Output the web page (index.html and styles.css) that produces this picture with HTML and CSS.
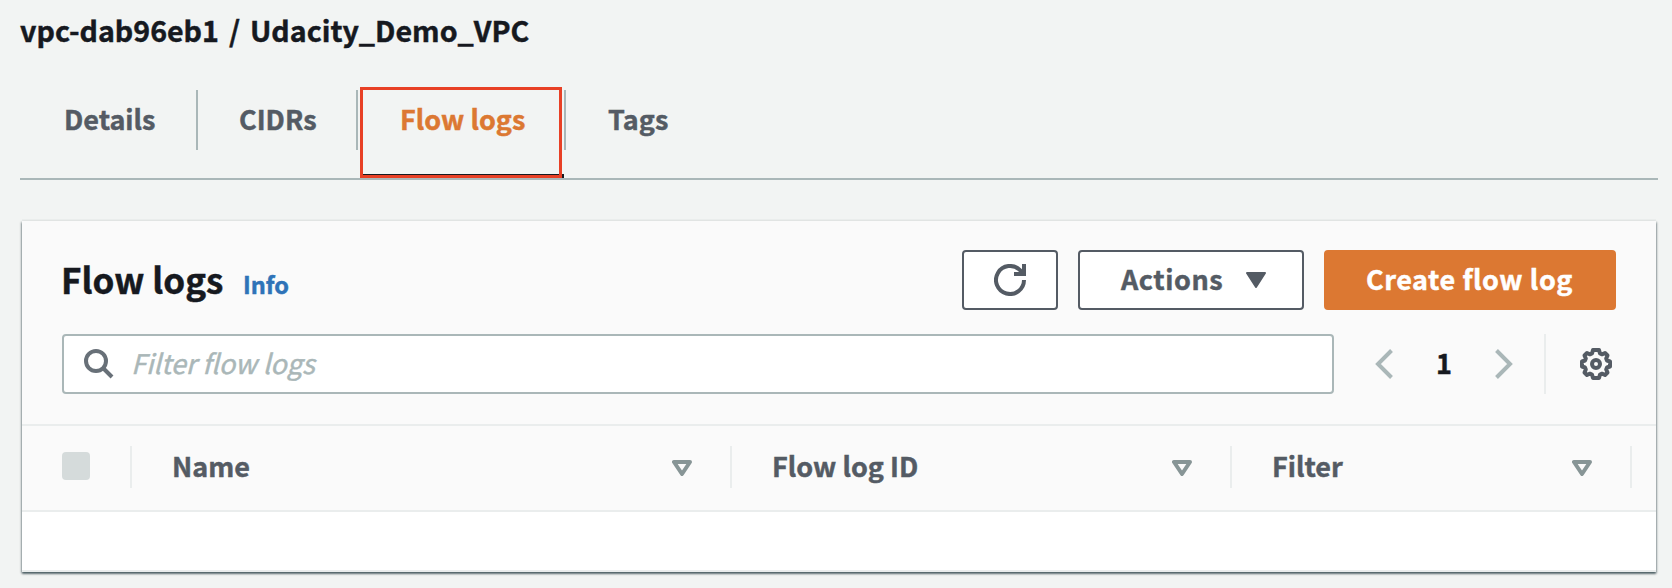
FILE: index.html
```html
<!DOCTYPE html>
<html lang="en">
<head>
<meta charset="utf-8">
<title>Flow logs</title>
<link rel="stylesheet" href="styles.css">
</head>
<body>
<h1 class="page-title"><span>vpc-dab96eb1 / Udacity_Demo_VPC</span></h1>
<nav class="tabs">
  <a class="tab tab-details"><span>Details</span></a>
  <a class="tab tab-cidrs"><span>CIDRs</span></a>
  <a class="tab tab-flow active"><span>Flow logs</span></a>
  <a class="tab tab-tags"><span>Tags</span></a>
</nav>
<section class="card">
  <header class="card-header">
    <div class="heading-row">
      <h2 class="heading"><span>Flow logs</span></h2>
      <a class="info"><span>Info</span></a>
      <div class="actions">
        <button class="btn btn-refresh" aria-label="Refresh">
          <svg width="32" height="32" viewBox="0 0 32 32" fill="none" stroke="currentColor" stroke-width="4"><path d="M30 16a14 14 0 1 1-4-9.800l3 3"/><path d="M30 0v10H20"/></svg>
        </button>
        <button class="btn btn-actions"><span>Actions</span>
          <svg width="20" height="16" viewBox="0 0 20 16" fill="currentColor" stroke="currentColor" stroke-width="2" stroke-linejoin="round"><path d="M1 1h18l-9 14z"/></svg>
        </button>
        <button class="btn btn-primary"><span>Create flow log</span></button>
      </div>
    </div>
    <div class="filter-row">
      <div class="search">
        <svg width="30" height="30" viewBox="0 0 30 30" fill="none" stroke="currentColor" stroke-width="4"><circle cx="12" cy="12" r="10"/><path d="M19 19l9 9"/></svg>
        <span class="placeholder">Filter flow logs</span>
      </div>
      <div class="pager">
        <svg width="18" height="30" viewBox="0 0 18 30" fill="none" stroke="currentColor" stroke-width="4"><path d="M16.500 1.500L3 15l13.500 13.500"/></svg>
        <span class="page">1</span>
        <svg width="18" height="30" viewBox="0 0 18 30" fill="none" stroke="currentColor" stroke-width="4"><path d="M1.500 1.500L15 15L1.500 28.500"/></svg>
      </div>
      <div class="settings">
        <svg width="32" height="32" viewBox="0 0 32 32" fill="none" stroke="currentColor" stroke-width="4"><path stroke-linejoin="round" d="M13 2h6l1 3.500 2 .8 3-1.300 2.500 2.500-1.300 3 .8 2 3 1v5l-3 1-.8 2 1.300 3-2.500 2.500-3-1.300-2 .8-1 3.500h-6l-1-3.500-2-.8-3 1.300L4.500 24.500l1.300-3-.8-2L2 18.500v-5l3-1 .8-2-1.300-3L7 5l3 1.300 2-.8z"/><circle cx="16" cy="16" r="4"/></svg>
      </div>
    </div>
  </header>
  <div class="table-head">
    <div class="cell cell-check"><i class="checkbox"></i></div>
    <div class="cell cell-name"><span>Name</span><svg class="sort" width="20" height="16" viewBox="0 0 20 16"><path d="M2 2h16l-8 12z"/></svg></div>
    <div class="cell cell-id"><span>Flow log ID</span><svg class="sort" width="20" height="16" viewBox="0 0 20 16"><path d="M2 2h16l-8 12z"/></svg></div>
    <div class="cell cell-filter"><span>Filter</span><svg class="sort" width="20" height="16" viewBox="0 0 20 16"><path d="M2 2h16l-8 12z"/></svg></div>
  </div>
  <div class="table-body"></div>
</section>
</body>
</html>
```
FILE: styles.css
```css
*, *::before, *::after { box-sizing: border-box; }
body {
  margin: 0;
  height: 588px;
  overflow: hidden;
  background: #f2f4f3;
  color: #16191f;
  font-family: "Noto Sans CJK SC", "Open Sans", sans-serif;
  font-weight: 700;
  font-size: 27px;
  line-height: 40px;
  -webkit-text-stroke: .45px currentColor;
}
svg { display: block; flex: none; }
span { white-space: nowrap; }
.page-title { margin: 0; padding: 10px 0 0 20px; height: 87px; font-size: 28.6px; line-height: 40px; word-spacing: 3.5px; }
.tabs {
  display: flex;
  height: 93px;
  margin: 0 14px 0 20px;
  border-bottom: 2px solid #aab7b8;
  color: #545b64;
}
.tab { display: flex; height: 60px; margin-top: 3px; padding: 9px 0 0 42px; border-right: 2px solid #aab7b8; }
.tab-details { width: 178px; padding-left: 44px; }
.tab-cidrs { width: 160px; padding-left: 41px; }
.tab-flow {
  position: relative;
  width: 208px;
}
.tab-flow.active { color: #dc7832; }
.tab-flow::before { content: ""; position: absolute; left: 2px; top: 84px; width: 204px; height: 4px; background: #16191f; }
.tab-flow::after { content: ""; position: absolute; left: 2px; top: -3px; width: 202px; height: 91px; border: 3px solid #e84025; }
.tab-tags { border: 0; }
.card {
  margin: 41px 16px 0 22px;
  height: 351px;
  background: #fff;
  border-bottom: 2px solid #eaeded;
  box-shadow: 0 2px 2px 0 rgba(0, 28, 36, .5), 1px 1px 2px 0 rgba(0, 28, 36, .25), -1px 1px 2px 0 rgba(0, 28, 36, .25), 0 -2px 0 #eaedec;
}
.card-header { height: 203px; padding: 29px 40px 0; background: #fafafa; }
.heading-row { display: flex; height: 60px; }
.heading { margin: 0; padding: 4px 0 0; margin-left: -1px; width: 182px; font-size: 35px; line-height: 50px; }
.info { color: #2e73b8; font-size: 23.5px; line-height: 36px; padding-top: 16px; }
.actions { display: flex; gap: 20px; margin-left: auto; }
.btn {
  display: flex;
  align-items: center;
  height: 60px;
  padding: 0;
  border: 2px solid #545b64;
  border-radius: 4px;
  background: #fff;
  color: #545b64;
  font: inherit;
  letter-spacing: .55px;
}
.btn span { padding-bottom: 2px; }
.btn-refresh { width: 96px; padding-left: 30px; }
.btn-actions { width: 226px; padding: 0 36px 0 41px; justify-content: space-between; }
.btn-primary { width: 292px; padding-left: 40px; background: #dc7832; border-color: #dc7832; color: #fff; }
.filter-row { display: flex; height: 60px; margin-top: 24px; }
.search {
  display: flex;
  align-items: center;
  width: 1272px;
  padding-left: 20px;
  gap: 17px;
  border: 2px solid #aab7b8;
  border-radius: 4px;
  background: #fff;
  color: #687078;
}
.placeholder { padding-bottom: 3px; color: #aab7b8; font-weight: 400; font-style: italic; }
.pager { display: flex; align-items: center; width: 178px; margin-left: 41px; color: #aab7b8; }
.page { width: 102px; padding-bottom: 3px; text-align: center; color: #16191f; }
.settings { width: 72px; margin-left: -9px; padding: 14px 0 0 34px; border-left: 2px solid #eaeded; color: #545b64; }
.table-head {
  display: flex;
  height: 88px;
  padding-top: 20px;
  background: #fafafa;
  border-top: 2px solid #eaeded;
  border-bottom: 2px solid #eaeded;
  color: #545b64;
}
.cell { display: flex; height: 42px; padding: 0 38px 0 40px; border-right: 2px solid #eaeded; justify-content: space-between; }
.cell-check { width: 110px; padding: 6px 0 0 40px; }
.cell-name { width: 600px; }
.cell-id { width: 500px; }
.cell-filter { width: 400px; }
.checkbox { width: 28px; height: 28px; border-radius: 4px; background: #d5dbdb; }
.sort { margin-top: 14px; fill: none; stroke: #879596; stroke-width: 4; stroke-linejoin: round; }
```
